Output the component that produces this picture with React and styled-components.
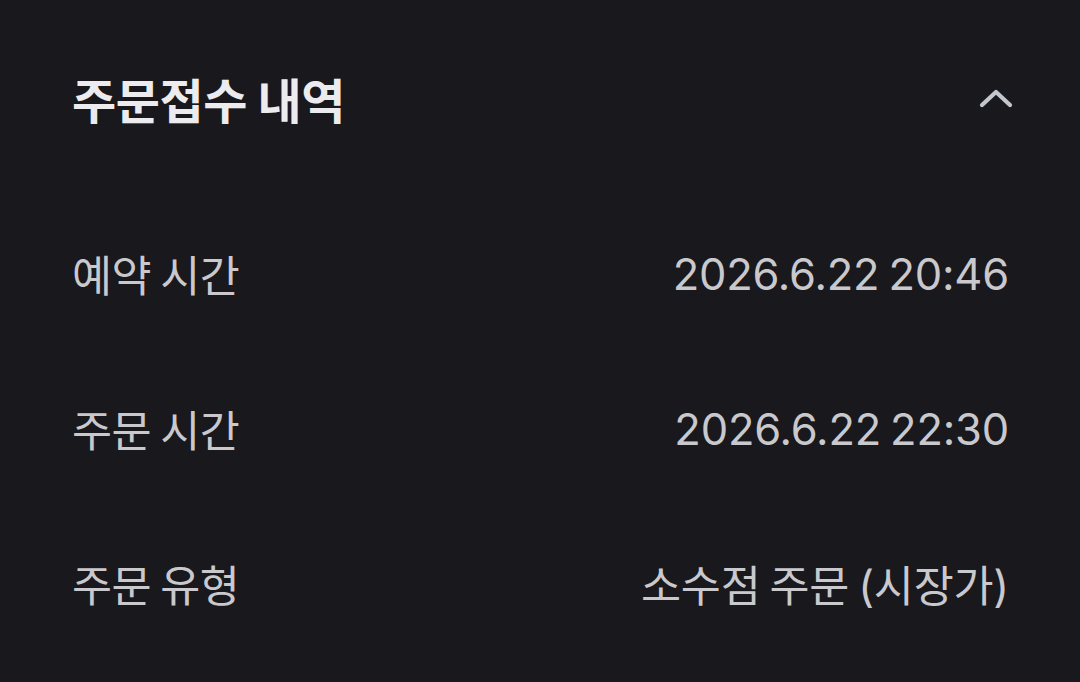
import styled, { createGlobalStyle } from 'styled-components';

const GlobalStyle = createGlobalStyle`
  html, body {
    margin: 0;
    padding: 0;
    background-color: #18181d;
  }
  body {
    font-family: "Noto Sans CJK KR", "Noto Sans", sans-serif;
  }
`;

const orderRows = [
  { label: '예약 시간', value: '2026.6.22 20:46' },
  { label: '주문 시간', value: '2026.6.22 22:30' },
  { label: '주문 유형', value: '소수점 주문 (시장가)' },
];

export default function App() {
  return (
    <>
      <GlobalStyle />
      <Section>
        <Header>
          <Title>주문접수 내역</Title>
          <ToggleButton aria-label="접기">
            <svg width="34" height="20" viewBox="0 0 34 20" fill="none">
              <path d="M3 17 L17 4 L31 17" stroke="#c3c6cd" strokeWidth="4.2" strokeLinecap="round" strokeLinejoin="round" />
            </svg>
          </ToggleButton>
        </Header>

        <RowList>
          {orderRows.map(row => (
            <Row key={row.label}>
              <Label>{row.label}</Label>
              <Value>{row.value}</Value>
            </Row>
          ))}
        </RowList>
      </Section>
    </>
  );
}

const Section = styled.div`
  width: 1080px;
  height: 682px;
  box-sizing: border-box;
  padding: 0 71px 0 72px;
  background-color: #18181d;
  overflow: hidden;
`;

const Header = styled.div`
  display: flex;
  align-items: center;
  justify-content: space-between;
  height: 196px;
`;

const Title = styled.h2`
  margin: 0;
  font-size: 48px;
  font-weight: 700;
  color: #ececee;
  letter-spacing: -0.4px;
`;

const ToggleButton = styled.button`
  display: flex;
  align-items: center;
  justify-content: center;
  padding: 0;
  margin-right: -4px;
  border: none;
  background: none;
`;

const RowList = styled.div`
  display: flex;
  flex-direction: column;
`;

const Row = styled.div`
  display: flex;
  align-items: center;
  justify-content: space-between;
  height: 155px;
`;

const Label = styled.span`
  font-size: 43.5px;
  color: #c9c9cd;
  letter-spacing: -0.5px;
`;

const Value = styled.span`
  font-family: "Inter", "Noto Sans CJK KR", sans-serif;
  font-size: 43.5px;
  color: #c9c9cd;
  letter-spacing: -0.2px;
  word-spacing: -3px;
`;
